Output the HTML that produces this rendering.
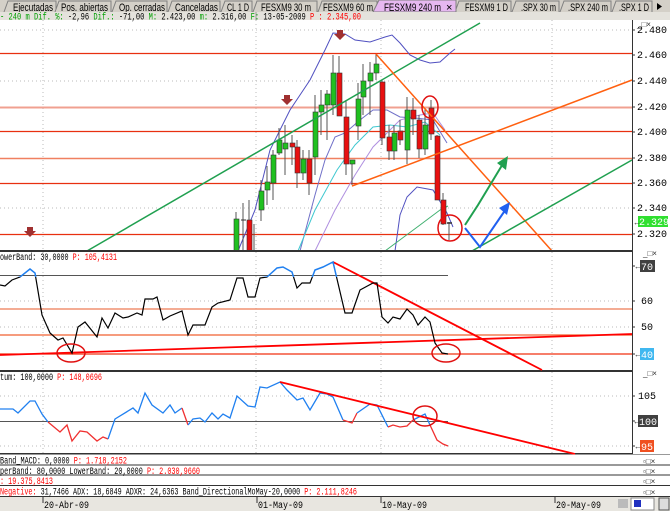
<!DOCTYPE html>
<html><head><meta charset="utf-8"><style>
body{margin:0;width:670px;height:511px;overflow:hidden;background:#fff;font-family:"Liberation Sans",sans-serif}
svg{display:block}
.t{font-family:"Liberation Sans",sans-serif;font-size:11px}
.m{font-family:"Liberation Mono",monospace;font-size:10px}
</style></head><body>
<svg width="670" height="511" viewBox="0 0 670 511" xmlns="http://www.w3.org/2000/svg">
<rect x="0" y="0" width="670" height="12" fill="#d4d0c8"/>
<g fill="#d4d0c8" stroke="#808080" stroke-width="1">
<path d="M4,12 L8,1 H56 V12"/><path d="M55,12 L59,1 H111 V12"/><path d="M112,12 L116,1 H167 V12"/>
<path d="M168,12 L172,1 H220 V12"/><path d="M221,12 L225,1 H252 V12"/><path d="M253,12 L257,1 H317 V12"/>
<path d="M318,12 L322,1 H377 V12"/><path d="M455,12 L459,1 H511 V12"/><path d="M512,12 L516,1 H559 V12"/>
<path d="M560,12 L564,1 H611 V12"/><path d="M612,12 L616,1 H652 V12"/>
</g>
<path d="M373,12 L379,0 H456 V12 Z" fill="#e6b8f0" stroke="#808080"/>
<g class="t" fill="#000">
<text x="13" y="11" textLength="40" lengthAdjust="spacingAndGlyphs">Ejecutadas</text>
<text x="61" y="11" textLength="47" lengthAdjust="spacingAndGlyphs">Pos. abiertas</text>
<text x="119" y="11" textLength="46" lengthAdjust="spacingAndGlyphs">Op. cerradas</text>
<text x="175" y="11" textLength="43" lengthAdjust="spacingAndGlyphs">Canceladas</text>
<text x="227" y="11" textLength="22" lengthAdjust="spacingAndGlyphs">CL 1 D</text>
<text x="261" y="11" textLength="50" lengthAdjust="spacingAndGlyphs">FESXM9 30 m</text>
<text x="323" y="11" textLength="50" lengthAdjust="spacingAndGlyphs">FESXM9 60 m</text>
<text x="384" y="11" textLength="57" lengthAdjust="spacingAndGlyphs">FESXM9 240 m</text>
<text x="446" y="11">×</text>
<text x="465" y="11" textLength="43" lengthAdjust="spacingAndGlyphs">FESXM9 1 D</text>
<text x="521" y="11" textLength="35" lengthAdjust="spacingAndGlyphs">.SPX 30 m</text>
<text x="568" y="11" textLength="40" lengthAdjust="spacingAndGlyphs">.SPX 240 m</text>
<text x="619" y="11" textLength="30" lengthAdjust="spacingAndGlyphs">.SPX 1 D</text>
</g>
<path d="M657,3 L662,6.5 L657,10Z" fill="#000"/>
<rect x="0" y="12" width="670" height="8" fill="#e4e2dc"/>
<text class="m" y="19.5" x="0" textLength="361" lengthAdjust="spacingAndGlyphs"><tspan fill="#00a000">- 240 m Dif. %:</tspan><tspan fill="#000"> -2,96 </tspan><tspan fill="#00a000">Dif.:</tspan><tspan fill="#000"> -71,00 </tspan><tspan fill="#00a000">M:</tspan><tspan fill="#000"> 2.423,00 </tspan><tspan fill="#00a000">m:</tspan><tspan fill="#000"> 2.316,00 </tspan><tspan fill="#00a000">F:</tspan><tspan fill="#000"> 13-05-2009 </tspan><tspan fill="#f00">P : 2.345,00</tspan></text>
<line x1="256" y1="12" x2="256" y2="20" stroke="#999"/>
<g stroke="#bbb" stroke-dasharray="1,3">
<line x1="43" y1="20" x2="43" y2="453"/><line x1="256" y1="20" x2="256" y2="453"/><line x1="381" y1="20" x2="381" y2="453"/><line x1="552" y1="20" x2="552" y2="453"/>
<line x1="0" y1="30" x2="632" y2="30"/><line x1="0" y1="81" x2="632" y2="81"/><line x1="0" y1="208" x2="632" y2="208"/>
<line x1="0" y1="301" x2="632" y2="301"/><line x1="0" y1="327" x2="632" y2="327"/><line x1="0" y1="396" x2="632" y2="396"/><line x1="0" y1="446" x2="632" y2="446"/>
</g>
<g stroke-width="1.3">
<line x1="0" y1="53.5" x2="632" y2="53.5" stroke="#e83010"/>
<line x1="0" y1="107.5" x2="632" y2="107.5" stroke="#f0a090" stroke-width="2"/>
<line x1="0" y1="131.5" x2="632" y2="131.5" stroke="#e83010"/>
<line x1="0" y1="158.5" x2="632" y2="158.5" stroke="#f08060" stroke-width="1.6"/>
<line x1="0" y1="183.5" x2="632" y2="183.5" stroke="#e83010"/>
<line x1="0" y1="234.5" x2="632" y2="234.5" stroke="#e83010"/>
</g>
<g fill="none" stroke-width="1">
<polyline stroke="#5050c0" points="238,251 255,210 270,150 290,110 310,80 325,50 333,33 345,34 355,40 370,42 385,37 392,35 400,43 410,55 420,60 430,63 440,62 450,53 455,49"/>
<polyline stroke="#7070c8" points="300,251 315,195 325,160 335,137 345,133 360,120 373,110 387,110 400,117 415,118 433,120 447,143"/>
<polyline stroke="#5050c0" points="395,251 400,215 407,197 417,187 433,190 447,213 453,227"/>
<polyline stroke="#40c8d0" points="298,251 315,210 337,170 355,145 373,127 390,125 407,127 425,122 440,135"/>
<polyline stroke="#b090e0" points="315,251 335,210 355,175 373,147 390,130 400,120 420,115 433,113 445,130"/>
<polyline stroke="#40b070" points="385,251 420,225 440,210 448,206"/>
</g>
<g stroke="#555" stroke-width="1">
<line x1="236" y1="212" x2="236" y2="251"/><line x1="243" y1="203" x2="243" y2="251"/><line x1="249" y1="200" x2="249" y2="251"/><line x1="254" y1="224" x2="254" y2="251"/>
<line x1="261" y1="180" x2="261" y2="221"/><line x1="267" y1="166" x2="267" y2="205"/><line x1="273" y1="150" x2="273" y2="200"/><line x1="279" y1="128" x2="279" y2="155"/>
<line x1="285" y1="125" x2="285" y2="175"/><line x1="292" y1="135" x2="292" y2="165"/><line x1="297" y1="140" x2="297" y2="188"/><line x1="303" y1="150" x2="303" y2="180"/>
<line x1="309" y1="150" x2="309" y2="195"/><line x1="315" y1="95" x2="315" y2="175"/><line x1="321" y1="90" x2="321" y2="135"/><line x1="327" y1="90" x2="327" y2="140"/>
<line x1="333" y1="55" x2="333" y2="115"/><line x1="339" y1="56" x2="339" y2="115"/><line x1="346" y1="100" x2="346" y2="175"/><line x1="352" y1="160" x2="352" y2="185"/>
<line x1="358" y1="83" x2="358" y2="140"/><line x1="363" y1="64" x2="363" y2="115"/><line x1="370" y1="62" x2="370" y2="115"/><line x1="376" y1="54" x2="376" y2="80"/>
<line x1="382" y1="80" x2="382" y2="145"/><line x1="389" y1="125" x2="389" y2="160"/><line x1="394" y1="125" x2="394" y2="160"/><line x1="400" y1="120" x2="400" y2="145"/>
<line x1="407" y1="97" x2="407" y2="164"/><line x1="413" y1="98" x2="413" y2="135"/><line x1="419" y1="115" x2="419" y2="158"/><line x1="425" y1="108" x2="425" y2="155"/>
<line x1="431" y1="100" x2="431" y2="140"/><line x1="437" y1="135" x2="437" y2="200"/><line x1="443" y1="193" x2="443" y2="225"/><line x1="449" y1="222" x2="449" y2="240"/>
</g>
<g stroke="#333" stroke-width="0.6">
<g fill="#20c020">
<rect x="234" y="219" width="5" height="32"/><rect x="259" y="191" width="5" height="19"/><rect x="265" y="182" width="5" height="8"/><rect x="271" y="155" width="5" height="28"/>
<rect x="277" y="140" width="5" height="13"/><rect x="283" y="143" width="5" height="6"/><rect x="301" y="159" width="5" height="14"/><rect x="313" y="112" width="5" height="45"/>
<rect x="319" y="105" width="5" height="7"/><rect x="325" y="94" width="5" height="11"/><rect x="331" y="73" width="5" height="32"/><rect x="350" y="160" width="5" height="4"/>
<rect x="356" y="99" width="5" height="27"/><rect x="361" y="81" width="5" height="16"/><rect x="368" y="73" width="5" height="8"/><rect x="374" y="64" width="5" height="9"/>
<rect x="392" y="133" width="5" height="18"/><rect x="405" y="110" width="5" height="40"/><rect x="423" y="125" width="5" height="24"/>
</g>
<g fill="#e81010">
<rect x="247" y="220" width="5" height="31"/><rect x="290" y="143" width="5" height="4"/><rect x="295" y="147" width="5" height="26"/><rect x="307" y="159" width="5" height="24"/>
<rect x="337" y="73" width="5" height="43"/><rect x="344" y="117" width="5" height="47"/><rect x="380" y="82" width="5" height="56"/><rect x="387" y="137" width="5" height="14"/>
<rect x="398" y="131" width="5" height="9"/><rect x="411" y="110" width="5" height="9"/><rect x="417" y="120" width="5" height="29"/><rect x="429" y="108" width="5" height="26"/>
<rect x="435" y="136" width="5" height="64"/><rect x="441" y="200" width="5" height="24"/>
</g>
</g>
<line x1="241" y1="220" x2="246" y2="220" stroke="#333"/><line x1="447" y1="223" x2="452" y2="223" stroke="#333" stroke-width="1.5"/>
<g fill="none" stroke-width="1.5">
<line x1="87" y1="251" x2="480" y2="23" stroke="#20a050"/>
<line x1="376" y1="54" x2="552" y2="251" stroke="#ff6010"/>
<line x1="352" y1="186" x2="632" y2="80" stroke="#ff6010"/>
<line x1="472" y1="251" x2="632" y2="160" stroke="#20a050"/>
<polyline points="465,225 478,205 504,162" stroke="#20a050" stroke-width="2"/>
<path d="M508,156 L497,163 L506,170 Z" fill="#20a050" stroke="none"/>
<polyline points="465,228 480,247 506,209" stroke="#2060f0" stroke-width="2"/>
<path d="M510,202 L499,208 L507,215 Z" fill="#2060f0" stroke="none"/>
<ellipse cx="430" cy="107" rx="8" ry="11" stroke="#e01010"/>
<ellipse cx="450" cy="228" rx="12" ry="13" stroke="#e01010"/>
</g>
<g fill="#a03030">
<path d="M337,30 h6 v4 h3 l-6,6 l-6,-6 h3z"/><path d="M284,95 h6 v4 h3 l-6,6 l-6,-6 h3z"/><path d="M27,227 h6 v4 h3 l-6,6 l-6,-6 h3z"/>
</g>
<rect x="0" y="250" width="670" height="2" fill="#333"/>
<rect x="0" y="370" width="670" height="2" fill="#333"/>
<rect x="0" y="453" width="670" height="1.5" fill="#333"/>
<text class="m" x="0" y="260" textLength="117" lengthAdjust="spacingAndGlyphs"><tspan fill="#000">owerBand: 30,0000 </tspan><tspan fill="#f00">P: 105,4131</tspan></text>
<text class="m" x="0" y="380" textLength="102" lengthAdjust="spacingAndGlyphs"><tspan fill="#000">tum: 100,0000 </tspan><tspan fill="#f00">P: 148,0696</tspan></text>
<line x1="0" y1="275.5" x2="448" y2="275.5" stroke="#555"/>
<line x1="0" y1="309" x2="632" y2="309" stroke="#f09070" stroke-width="1.5"/>
<line x1="0" y1="335" x2="632" y2="335" stroke="#f06030" stroke-width="1.2"/>
<line x1="0" y1="354" x2="632" y2="354" stroke="#f03010" stroke-width="1.2"/>
<line x1="0" y1="355" x2="632" y2="334" stroke="#f00" stroke-width="1.8"/>
<line x1="333" y1="262" x2="542" y2="370" stroke="#f00" stroke-width="1.8"/>
<defs><clipPath id="up"><rect x="0" y="250" width="632" height="27"/></clipPath><clipPath id="dn"><rect x="0" y="277" width="632" height="93"/></clipPath></defs>
<g fill="none" stroke-width="1.2">
<polyline clip-path="url(#dn)" stroke="#000" points="0,285 5,286 12,280 20,277 30,269 35,273 42,315 50,333 58,340 63,338 72,353 78,327 85,322 97,337 102,318 108,328 115,313 123,318 128,317 137,313 142,315 145,299 153,299 157,297 163,320 170,316 182,311 188,335 193,325 200,325 205,325 212,307 218,303 230,300 237,278 243,278 248,297 255,297 260,278 267,277 277,268 283,267 292,272 297,288 302,283 310,283 315,270 323,267 333,262 345,313 352,313 360,290 373,283 377,283 382,317 388,323 393,317 400,319 407,309 413,315 418,325 425,317 430,322 435,343 442,353 448,354"/>
<polyline clip-path="url(#up)" stroke="#2080f0" stroke-width="1.5" points="0,285 5,286 12,280 20,277 30,269 35,273 42,315 230,300 237,278 243,278 248,297 255,297 260,278 267,277 277,268 283,267 292,272 297,288 302,283 310,283 315,270 323,267 333,262 345,313"/>
</g>
<g fill="none" stroke="#e01010" stroke-width="1.5"><ellipse cx="71" cy="353" rx="14" ry="9"/><ellipse cx="446" cy="353" rx="14" ry="9"/></g>
<line x1="0" y1="421.5" x2="448" y2="421.5" stroke="#555"/>
<g fill="none" stroke-width="1.3">
<polyline stroke="#2080f0" points="0,409 13,409 18,413 30,401 35,401 42,414 48,422"/>
<polyline stroke="#f03030" points="48,422 60,432 67,425 72,441 80,431 87,432 97,441 103,437 108,439"/>
<polyline stroke="#2080f0" points="108,439 115,419 133,408 138,413 145,393 152,405 163,413 170,405 175,413 182,408"/>
<polyline stroke="#f03030" points="182,408 188,425"/>
<polyline stroke="#2080f0" points="188,425 193,419 200,418 205,422 212,413 218,419 223,414 230,418 237,396 248,406 255,407 260,387 267,388 280,382 287,390 297,400 303,398 310,410 320,393 327,394 333,397 343,420"/>
<polyline stroke="#f03030" points="343,420 352,423 357,413"/>
<polyline stroke="#2080f0" points="357,413 370,404 377,405 388,427"/>
<polyline stroke="#f03030" points="388,427 393,425 400,427 407,426 413,420"/>
<polyline stroke="#2080f0" points="413,420 425,414 430,425"/>
<polyline stroke="#f03030" points="430,425 437,440 443,444 448,446"/>
</g>
<line x1="280" y1="382" x2="575" y2="454" stroke="#f00" stroke-width="1.8"/>
<ellipse cx="425" cy="416" rx="12" ry="10" fill="none" stroke="#e01010" stroke-width="1.5"/>
<rect x="632" y="20" width="38" height="434" fill="#fff"/>
<line x1="632.5" y1="20" x2="632.5" y2="454" stroke="#333"/>
<g stroke="#333"><path d="M632,30h3M632,55h3M632,81h3M632,107h3M632,132h3M632,158h3M632,183h3M632,208h3M632,234h3M632,266h3M632,301h3M632,327h3M632,354h3M632,396h3M632,421h3M632,446h3"/></g>
<g class="m" font-size="10" fill="#000">
<text x="637" y="33">2.480</text><text x="637" y="58">2.460</text><text x="637" y="84">2.440</text><text x="637" y="110">2.420</text>
<text x="637" y="135">2.400</text><text x="637" y="161">2.380</text><text x="637" y="186">2.360</text><text x="637" y="211">2.340</text><text x="637" y="237">2.320</text>
<text x="641" y="304">60</text><text x="641" y="330">50</text><text x="638" y="399">105</text>
</g>
<rect x="638" y="216" width="30" height="11" fill="#30e030"/><text class="m" font-size="10" x="639" y="225" fill="#fff">2.329</text>
<rect x="640" y="260" width="15" height="12" fill="#404040"/><text class="m" font-size="10" x="641" y="270" fill="#fff">70</text>
<rect x="640" y="348" width="14" height="12" fill="#40b8f0"/><text class="m" font-size="10" x="641" y="358" fill="#fff">40</text>
<rect x="638" y="415" width="20" height="12" fill="#404040"/><text class="m" font-size="10" x="639" y="425" fill="#fff">100</text>
<rect x="640" y="440" width="14" height="12" fill="#f05020"/><text class="m" font-size="10" x="641" y="450" fill="#fff">95</text>
<g font-size="8" fill="#333"><text x="633" y="225">←</text><text x="634" y="269">←</text><text x="634" y="357">←</text><text x="633" y="424">←</text><text x="634" y="449">←</text></g>
<g fill="#333" font-size="8" font-family="Liberation Sans">
<text x="637" y="27">_□×</text><text x="643" y="256">_□×</text><text x="643" y="376">_□×</text>
</g>
<rect x="0" y="454.5" width="670" height="42" fill="#fff"/>
<g stroke="#333"><line x1="0" y1="465" x2="670" y2="465"/><line x1="0" y1="475" x2="670" y2="475"/><line x1="0" y1="485.5" x2="670" y2="485.5"/><line x1="0" y1="496.5" x2="670" y2="496.5"/></g>
<text class="m" x="0" y="463.5" textLength="127" lengthAdjust="spacingAndGlyphs"><tspan fill="#000">Band_MACD: 0,0000 </tspan><tspan fill="#f00">P: 1.718,2152</tspan></text>
<text class="m" x="0" y="474" textLength="200" lengthAdjust="spacingAndGlyphs"><tspan fill="#000">perBand: 80,0000 LowerBand: 20,0000 </tspan><tspan fill="#f00">P: 2.030,9660</tspan></text>
<text class="m" x="0" y="484" fill="#f00" textLength="53" lengthAdjust="spacingAndGlyphs">: 19.375,8413</text>
<text class="m" x="0" y="494.5" textLength="357" lengthAdjust="spacingAndGlyphs"><tspan fill="#f00">Negative: </tspan><tspan fill="#000">31,7466 ADX: 18,6849 ADXR: 24,6363 Band_DirectionalMoMay-20,0000 </tspan><tspan fill="#f00">P: 2.111,8246</tspan></text>
<g fill="#333" font-size="8" font-family="Liberation Sans"><text x="643" y="464">▫□×</text><text x="643" y="474">▫□×</text><text x="643" y="484">▫□×</text><text x="643" y="495">▫□×</text></g>
<rect x="0" y="497" width="670" height="14" fill="#e8e6e0"/>
<g stroke="#333"><line x1="43" y1="497" x2="43" y2="503"/><line x1="257" y1="497" x2="257" y2="503"/><line x1="381" y1="497" x2="381" y2="503"/><line x1="555" y1="497" x2="555" y2="503"/></g>
<g class="m" font-size="10" fill="#000"><text x="44" y="508" textLength="45" lengthAdjust="spacingAndGlyphs">20-Abr-09</text><text x="258" y="508" textLength="45" lengthAdjust="spacingAndGlyphs">01-May-09</text><text x="382" y="508" textLength="45" lengthAdjust="spacingAndGlyphs">10-May-09</text><text x="556" y="508" textLength="45" lengthAdjust="spacingAndGlyphs">20-May-09</text></g>
<rect x="618" y="499" width="10" height="9" fill="#bbb"/><rect x="631" y="498" width="23" height="12" fill="#fff" stroke="#888"/><rect x="634" y="500" width="7" height="7" fill="#2030c0"/>
<rect x="659" y="498" width="10" height="12" fill="#ddd" stroke="#555"/>
</svg>
</body></html>
